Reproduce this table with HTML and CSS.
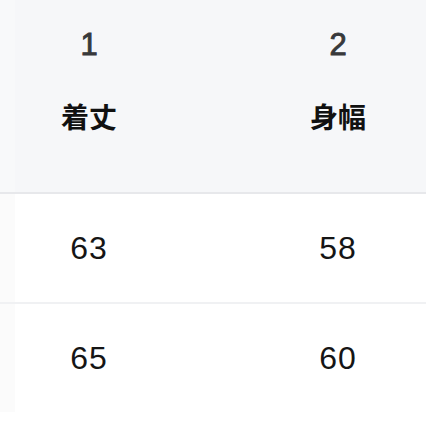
FILE: index.html
```html
<!DOCTYPE html>
<html lang="ja">
<head>
<meta charset="utf-8">
<link rel="stylesheet" href="styles.css">
</head>
<body>
<div class="table">
  <div class="row head">
    <div class="cell strip"></div>
    <div class="cell"><span class="num">1</span><span class="label">着丈</span></div>
    <div class="cell"><span class="num">2</span><span class="label">身幅</span></div>
  </div>
  <div class="row body">
    <div class="cell strip"></div>
    <div class="cell"><span class="val">63</span></div>
    <div class="cell"><span class="val">58</span></div>
  </div>
  <div class="row body last">
    <div class="cell strip"></div>
    <div class="cell"><span class="val">65</span></div>
    <div class="cell"><span class="val">60</span></div>
  </div>
</div>
</body>
</html>
```
FILE: styles.css
```css
html, body {
  margin: 0;
  padding: 0;
  background: #ffffff;
  overflow: hidden;
}
body {
  width: 426px;
  height: 426px;
  font-family: "Liberation Sans", "Noto Sans CJK JP", sans-serif;
}
.table {
  display: flex;
  flex-direction: column;
  width: 426px;
  overflow: hidden;
}
.row {
  display: grid;
  grid-template-columns: 15px 148px 350px;
}
.head {
  background: #f6f7f9;
  height: 192px;
  border-bottom: 2px solid #e7e8eb;
}
.body {
  height: 108px;
  border-bottom: 2px solid #f0f1f3;
}
.body.last {
  border-bottom: none;
}
.cell {
  display: flex;
  flex-direction: column;
  align-items: center;
}
.head .cell {
  padding-top: 30px;
}
.body .cell {
  justify-content: center;
}
.head .strip {
  background: #f8f9fa;
}
.body .strip {
  background: #fbfbfb;
}
.num {
  font-size: 31px;
  line-height: 30px;
  color: #38393b;
  -webkit-text-stroke: 0.9px #38393b;
}
.label {
  margin-top: 42px;
  font-family: "Noto Sans CJK JP", sans-serif;
  font-size: 28px;
  line-height: 28px;
  font-weight: 700;
  color: #111111;
}
.val {
  font-size: 32px;
  line-height: 32px;
  letter-spacing: 1px;
  color: #151515;
}
```
